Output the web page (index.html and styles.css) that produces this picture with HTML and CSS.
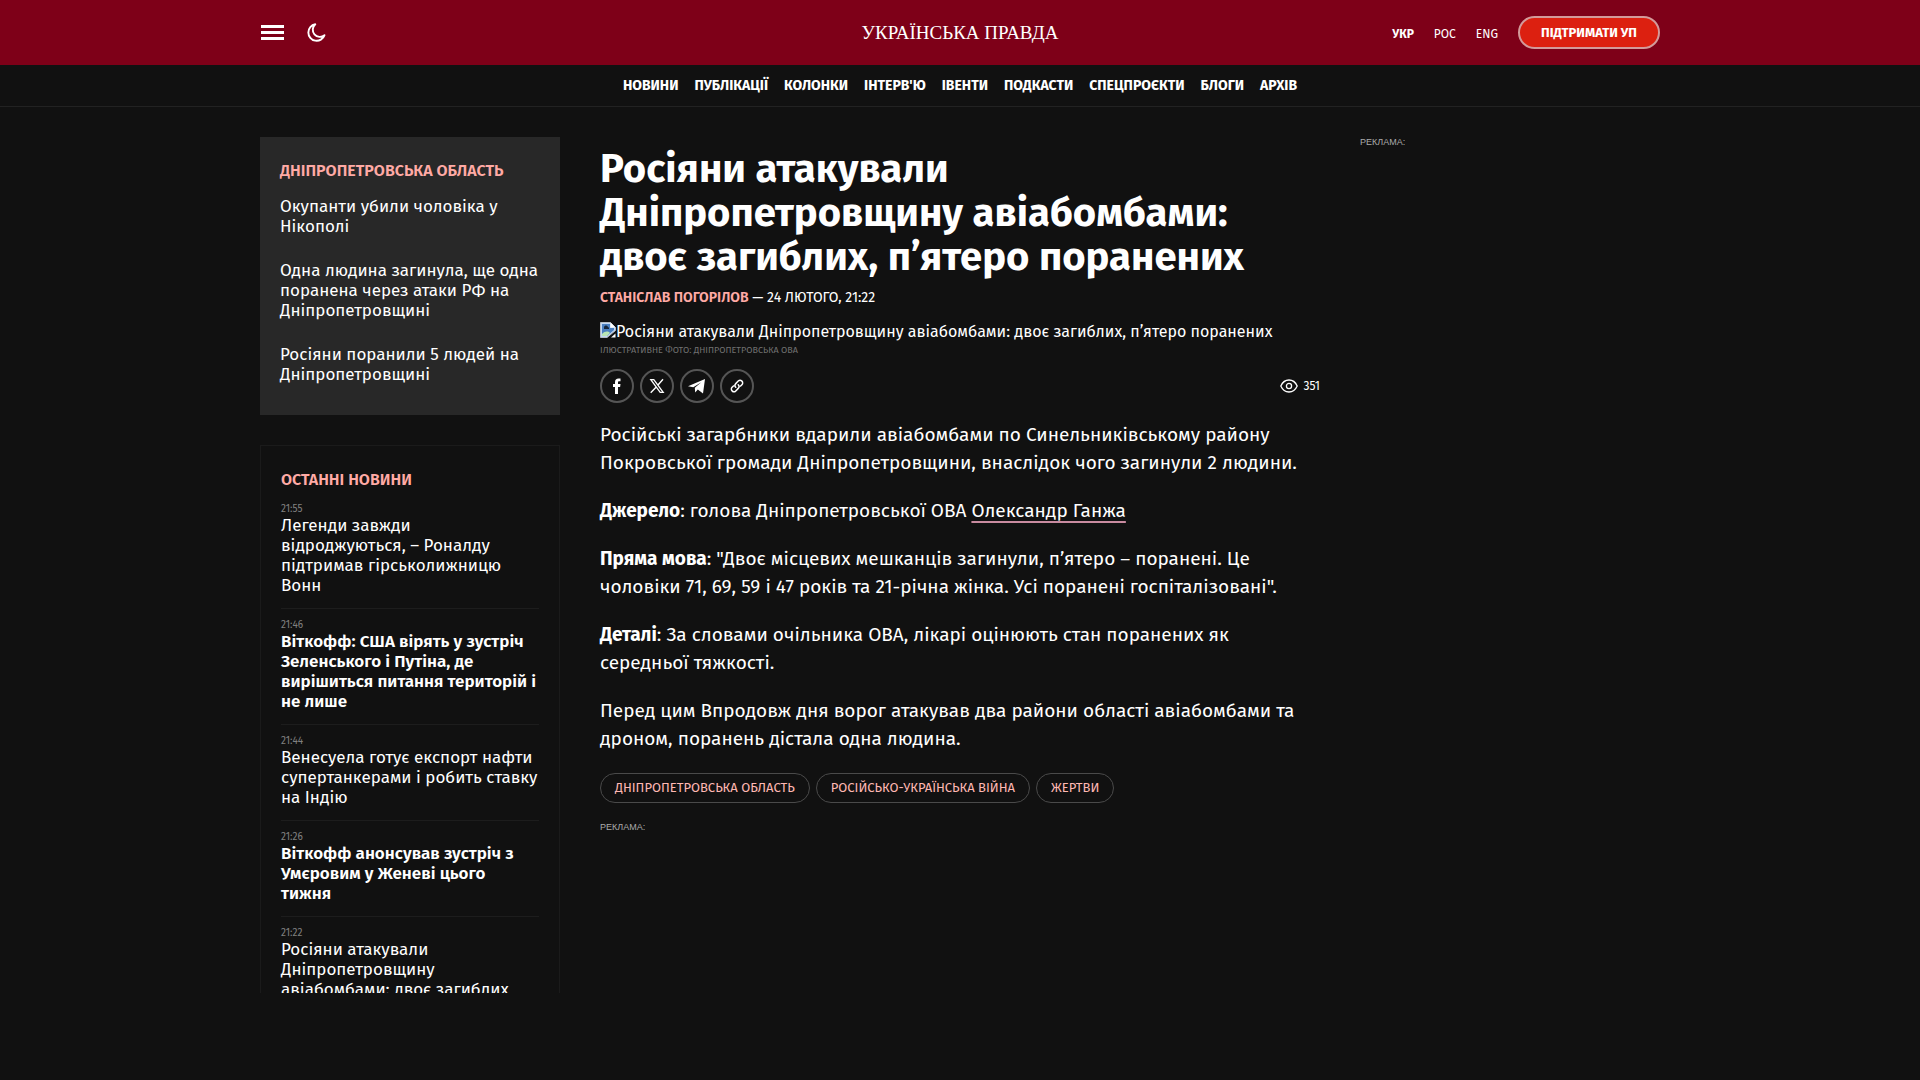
FILE: index.html
```html
<!DOCTYPE html>
<html lang="uk">
<head>
    <meta charset="UTF-8">
    <meta name="viewport" content="width=device-width, initial-scale=1">
    <title>Росіяни атакували Дніпропетровщину авіабомбами</title>
    <link rel="stylesheet" href="styles.css">
</head>
<body>
    <header class="header">
        <div class="container header-inner">
            <div class="header-left">
                <button class="icon-button" type="button" aria-label="Меню">
                    <svg width="24" height="16" viewBox="0 0 24 16"><path fill="#fff" d="M1 0h23v3H1zM1 6h23v3H1zM1 12h23v3H1z"/></svg>
                </button>
                <button class="icon-button" type="button" aria-label="Темна тема">
                    <svg width="20" height="20" viewBox="0 0 20 20"><path fill="none" stroke="#fff" stroke-width="1.9" stroke-linejoin="round" d="M9.3 1.3A8.3 8.3 0 1 0 18.5 12.2 7 7 0 0 1 9.3 1.3z"/></svg>
                </button>
            </div>
            <a class="logo" href="#">УКРАЇНСЬКА ПРАВДА</a>
            <div class="header-right">
                <a class="lang active" href="#">УКР</a>
                <a class="lang" href="#">РОС</a>
                <a class="lang" href="#">ENG</a>
                <a class="support" href="#">ПІДТРИМАТИ УП</a>
            </div>
        </div>
    </header>
    <nav class="nav">
        <a href="#">НОВИНИ</a>
        <a href="#">ПУБЛІКАЦІЇ</a>
        <a href="#">КОЛОНКИ</a>
        <a href="#">ІНТЕРВ'Ю</a>
        <a href="#">ІВЕНТИ</a>
        <a href="#">ПОДКАСТИ</a>
        <a href="#">СПЕЦПРОЄКТИ</a>
        <a href="#">БЛОГИ</a>
        <a href="#">АРХІВ</a>
    </nav>

    <div class="container layout">
        <aside class="sidebar">
            <section class="related">
                <h2 class="block-title">ДНІПРОПЕТРОВСЬКА ОБЛАСТЬ</h2>
                <a href="#">Окупанти убили чоловіка у Нікополі</a>
                <a href="#">Одна людина загинула, ще одна поранена через атаки РФ на Дніпропетровщині</a>
                <a href="#">Росіяни поранили 5 людей на Дніпропетровщині</a>
            </section>
            <section class="latest">
                <h2 class="block-title">ОСТАННІ НОВИНИ</h2>
                <article class="news">
                    <time>21:55</time>
                    <a href="#">Легенди завжди відроджуються, – Роналду підтримав гірськолижницю Вонн</a>
                </article>
                <article class="news important">
                    <time>21:46</time>
                    <a href="#">Віткофф: США вірять у зустріч Зеленського і Путіна, де вирішиться питання територій і не лише</a>
                </article>
                <article class="news">
                    <time>21:44</time>
                    <a href="#">Венесуела готує експорт нафти супертанкерами і робить ставку на Індію</a>
                </article>
                <article class="news important">
                    <time>21:26</time>
                    <a href="#">Віткофф анонсував зустріч з Умєровим у Женеві цього тижня</a>
                </article>
                <article class="news">
                    <time>21:22</time>
                    <a href="#">Росіяни атакували Дніпропетровщину авіабомбами: двоє загиблих, п’ятеро поранених</a>
                </article>
            </section>
        </aside>

        <main class="post">
            <h1>Росіяни атакували Дніпропетровщину авіабомбами: двоє загиблих, п’ятеро поранених</h1>
            <div class="byline"><a href="#">СТАНІСЛАВ ПОГОРІЛОВ</a> — 24 ЛЮТОГО, 21:22</div>
            <figure class="photo">
                <div class="photo-alt">
                    <svg width="16" height="16" viewBox="0 0 16 16">
                        <path fill="#c3d9f5" stroke="#b5bcc4" d="M.5.5h10l5 5v3L7 15.500H.5z"/>
                        <path fill="#4a7fc0" d="M2 2h8v4h4v2l-7 6H2z"/>
                        <path fill="#15263c" d="M4 6a2 2 0 0 1 4-1 1.500 1.500 0 0 1 1 2H4z"/>
                        <path fill="#b9e6b4" d="M2 14v-2c3-3 6-3 8-1l-3 3z"/>
                        <path fill="#fff" d="M10.500.5v5h5zM11 15.500l4.500-4v4z"/>
                    </svg>
                    <span>Росіяни атакували Дніпропетровщину авіабомбами: двоє загиблих, п’ятеро поранених</span>
                </div>
                <figcaption>ІЛЮСТРАТИВНЕ ФОТО: ДНІПРОПЕТРОВСЬКА ОВА</figcaption>
            </figure>
            <div class="actions">
                <a class="share" href="#" aria-label="Facebook">
                    <svg width="18" height="18" viewBox="0 0 18 18"><path fill="#fff" d="M7 17V10H5V7h2V5.200C7 2.700 8.300 1.500 10.500 1.500h2v2.800h-1.300c-.9 0-1.200.4-1.200 1.200V7h2.500l-.4 3H10v7z"/></svg>
                </a>
                <a class="share" href="#" aria-label="X">
                    <svg width="16" height="16" viewBox="0 0 16 16"><path fill="none" stroke="#fff" stroke-width="1.300" d="M1.800 1.700h3l9.400 12.600h-3z"/><path stroke="#fff" stroke-width="1.400" d="M14 1.200 9 7M7 9.200l-5.300 5.600"/></svg>
                </a>
                <a class="share" href="#" aria-label="Telegram">
                    <svg width="18" height="18" viewBox="0 0 18 18"><path fill="#fff" d="M0 9.200 17 2 15 16.500l-5.200-4.100-2.600 3-.4-4.700 6.500-5.400-8 5z"/></svg>
                </a>
                <a class="share" href="#" aria-label="Копіювати посилання">
                    <svg width="14" height="14" viewBox="0 0 16 16"><path fill="none" stroke="#fff" stroke-width="1.700" stroke-linecap="round" d="M6.600 9.400a2.900 2.900 0 0 1 0-4.100l2.800-2.900a2.900 2.900 0 0 1 4.200 4.200l-1.500 1.500M9.400 6.600a2.900 2.900 0 0 1 0 4.100l-2.800 2.900a2.900 2.900 0 0 1-4.200-4.200l1.500-1.500"/></svg>
                </a>
                <span class="views">
                    <svg width="18" height="14" viewBox="0 0 18 14"><path fill="none" stroke="#fff" stroke-width="1.300" d="M.8 7C2.600 3 5.600 1 9 1s6.400 2 8.200 6c-1.800 4-4.800 6-8.200 6S2.600 11 .8 7z"/><circle cx="9" cy="7" r="2.600" fill="none" stroke="#fff" stroke-width="1.300"/></svg>
                    351
                </span>
            </div>
            <div class="text">
                <p>Російські загарбники вдарили авіабомбами по Синельниківському району Покровської громади Дніпропетровщини, внаслідок чого загинули 2 людини.</p>
                <p><strong>Джерело</strong>: голова Дніпропетровської ОВА <a href="#">Олександр Ганжа</a></p>
                <p><strong>Пряма мова</strong>: "Двоє місцевих мешканців загинули, п’ятеро – поранені. Це чоловіки 71, 69, 59 і 47 років та 21-річна жінка. Усі поранені госпіталізовані".</p>
                <p><strong>Деталі</strong>: За словами очільника ОВА, лікарі оцінюють стан поранених як середньої тяжкості.</p>
                <p>Перед цим Впродовж дня ворог атакував два райони області авіабомбами та дроном, поранень дістала одна людина.</p>
            </div>
            <div class="tags">
                <a href="#">ДНІПРОПЕТРОВСЬКА ОБЛАСТЬ</a>
                <a href="#">РОСІЙСЬКО-УКРАЇНСЬКА ВІЙНА</a>
                <a href="#">ЖЕРТВИ</a>
            </div>
            <div class="ad">РЕКЛАМА:</div>
        </main>

        <aside class="ad">РЕКЛАМА:</aside>
    </div>
</body>
</html>
```
FILE: styles.css
```css
* {
    box-sizing: border-box;
}

body {
    margin: 0;
    background: #111;
    color: #fff;
    font-family: "Fira Sans", "Noto Sans", sans-serif;
    font-size: 16px;
}

a {
    color: inherit;
    text-decoration: none;
}

.container {
    max-width: 1400px;
    margin: 0 auto;
}

/* header */

.header {
    background: #7e0018;
}

.header-inner {
    display: grid;
    grid-template-columns: 1fr auto 1fr;
    align-items: center;
    height: 65px;
}

.header-left {
    display: flex;
    align-items: center;
    gap: 22px;
}

.icon-button {
    display: flex;
    padding: 0;
    border: 0;
    background: none;
    cursor: pointer;
}

.logo {
    font-family: "Liberation Serif", serif;
    font-size: 19px;
}

.header-right {
    display: flex;
    align-items: center;
    justify-content: flex-end;
    gap: 20px;
}

.lang {
    font-size: 12px;
    line-height: 16px;
    padding-top: 2px;
}

.lang.active {
    font-weight: 700;
}

.support {
    padding: 0 21px;
    border: 2px solid #d39a9a;
    border-radius: 17px;
    background: #dc2010;
    font-size: 13px;
    font-weight: 700;
    line-height: 29px;
}

.nav {
    display: flex;
    justify-content: center;
    gap: 16px;
    padding-top: 1px;
    border-bottom: 1px solid #222;
    font-size: 14px;
    font-weight: 700;
    line-height: 40px;
}

/* columns */

.layout {
    display: grid;
    grid-template-columns: 300px minmax(0, 1fr) 300px;
    gap: 40px;
    padding-top: 30px;
}

.block-title {
    margin: 0;
    color: #ffaaa5;
    font-size: 16px;
    font-weight: 600;
    line-height: 20px;
}

.related {
    display: flex;
    flex-direction: column;
    gap: 24px;
    margin-bottom: 30px;
    padding: 24px 20px 30px;
    background: #282828;
    font-size: 17px;
    line-height: 20px;
}

.related .block-title {
    margin-bottom: -8px;
}

.latest {
    height: 548px;
    overflow: hidden;
    padding: 24px 20px 0;
    border: 1px solid #1b1b1b;
    border-bottom: 0;
}

.latest .block-title {
    margin-bottom: 12px;
}

.news {
    margin-bottom: 9px;
    padding-bottom: 12px;
    border-bottom: 1px solid #1d1d1d;
    font-size: 17px;
    line-height: 20px;
}

.news time {
    display: block;
    color: #808080;
    font-size: 10px;
    line-height: 14px;
}

.news a {
    display: block;
}

.important {
    font-weight: 600;
}

.important time {
    font-weight: 400;
}

/* article */

.post h1 {
    margin: 10px 0 9px;
    font-size: 40px;
    font-weight: 700;
    line-height: 44px;
}

.byline {
    font-size: 14px;
    line-height: 20px;
}

.byline a {
    color: #ffaaa5;
    font-weight: 600;
}

.photo {
    margin: 14px 0 11px;
}

.photo-alt {
    display: flex;
    line-height: 20px;
}

.photo figcaption {
    color: #707070;
    font-size: 9px;
    line-height: 16px;
}

.actions {
    display: flex;
    align-items: center;
    gap: 6px;
}

.share {
    display: flex;
    align-items: center;
    justify-content: center;
    width: 34px;
    height: 34px;
    border: 2px solid #555;
    border-radius: 50%;
}

.views {
    display: flex;
    align-items: center;
    gap: 5px;
    margin-left: auto;
    font-size: 12px;
}

.text {
    margin: 18px 0 20px;
    font-size: 19px;
    line-height: 28px;
}

.text p {
    margin: 0 0 20px;
}

.text a {
    text-decoration: underline 2px #c98ba0;
    text-decoration-skip-ink: none;
    text-underline-offset: 4px;
}

.tags {
    display: flex;
    flex-wrap: wrap;
    gap: 6px;
}

.tags a {
    padding: 0 14px;
    border: 1px solid #4a4a4a;
    border-radius: 15px;
    color: #ffb8b3;
    font-size: 13px;
    line-height: 28px;
}

.ad {
    color: #aaa;
    font-family: "Liberation Sans", Arial, sans-serif;
    font-size: 9px;
    line-height: 10px;
}

.tags + .ad {
    margin-top: 19px;
}
```
